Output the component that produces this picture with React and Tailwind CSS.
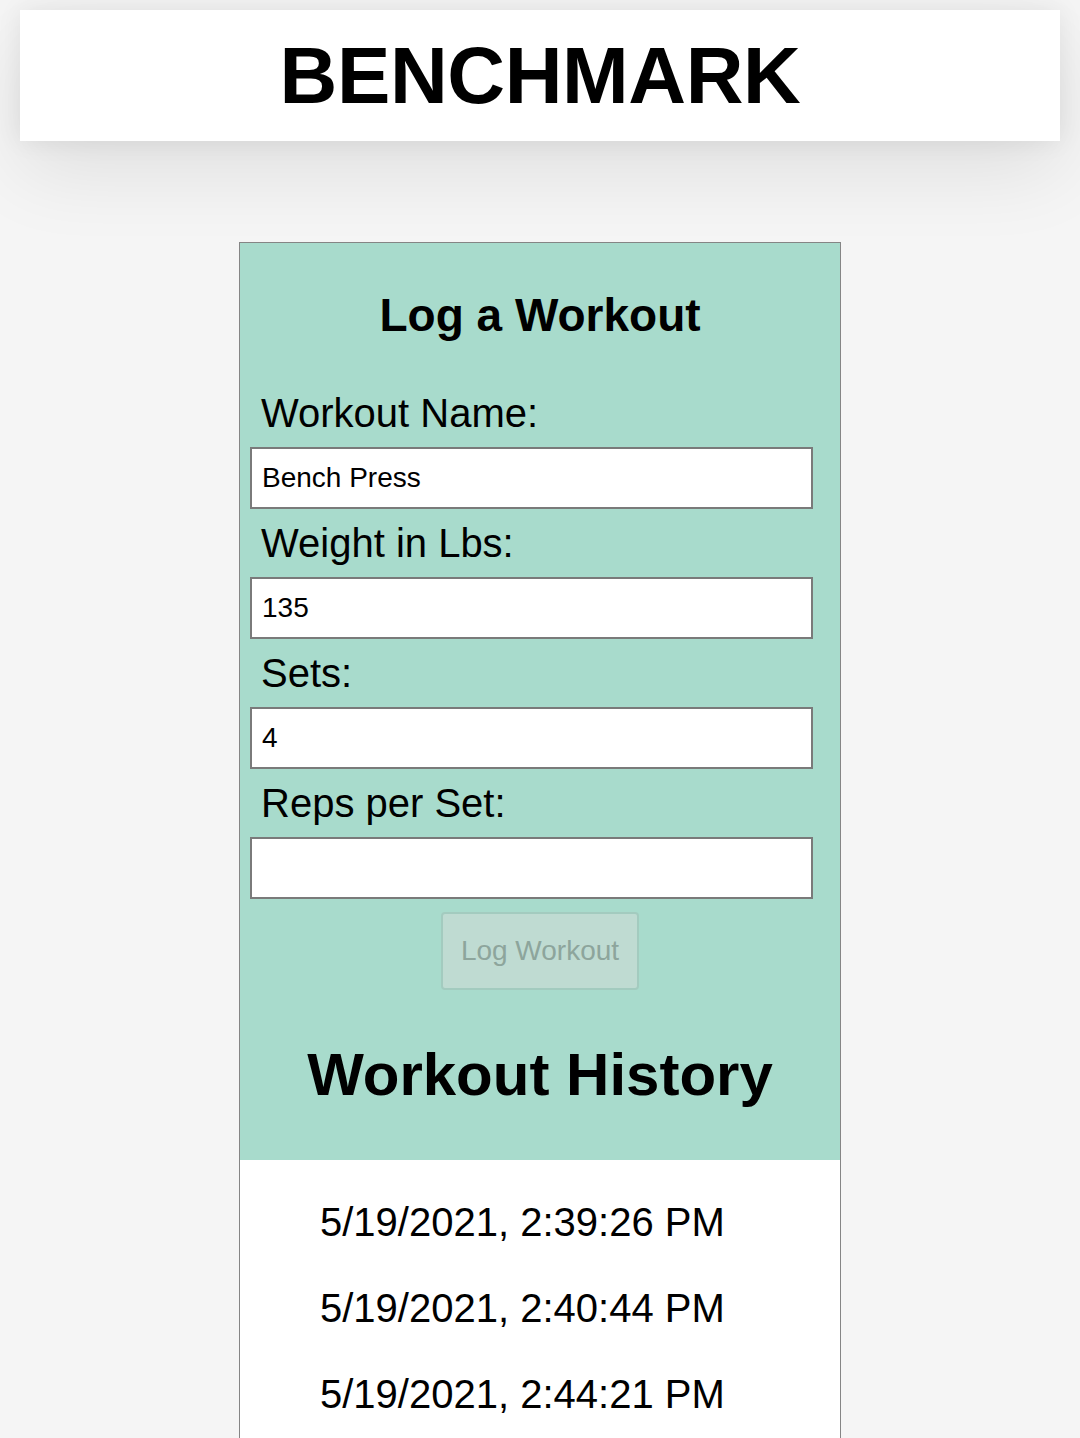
import React from "react";

const FIELDS = [
  { label: "Workout Name:", value: "Bench Press" },
  { label: "Weight in Lbs:", value: "135" },
  { label: "Sets:", value: "4" },
  { label: "Reps per Set:", value: "" },
];

const HISTORY = [
  "5/19/2021, 2:39:26 PM",
  "5/19/2021, 2:40:44 PM",
  "5/19/2021, 2:44:21 PM",
];

export default function App() {
  return (
    <div
      className="min-h-[1438px] bg-[#f5f5f5] pt-[10px] text-black"
      style={{ fontFamily: '"Liberation Sans", Arial, Helvetica, sans-serif' }}
    >
      {/* header */}
      <header className="mx-[20px] flex h-[131px] items-center justify-center bg-white shadow-[0_0_24px_rgba(0,0,0,0.07),0_30px_80px_rgba(0,0,0,0.09)]">
        <h1 className="text-[80px] font-bold leading-none tracking-[-0.4px]">BENCHMARK</h1>
      </header>

      <div className="mx-auto mt-[101px] w-[602px] border border-b-0 border-[#858585]">
        <div className="bg-[#a8dbcc]">
          <h2 className="pt-[49px] text-center text-[46px] font-bold leading-[46px]">Log a Workout</h2>

          <form className="mt-[41px] flex flex-col">
            {FIELDS.map((field) => (
              <div key={field.label} className="flex flex-col">
                <label className="h-[68px] pl-[21px] text-[40px] leading-[68px]">{field.label}</label>
                <input
                  type="text"
                  defaultValue={field.value}
                  className="ml-[10px] h-[62px] w-[563px] border-2 border-[#7a7a7a] bg-white px-[10px] text-[28px] text-black outline-none"
                />
              </div>
            ))}
            <div className="mt-[13px] flex justify-center">
              <button
                type="button"
                disabled
                className="h-[78px] w-[198px] rounded-[4px] border-2 border-[#a3cbbf] bg-[#bfdbd2] text-[28px] text-[#8da59c]"
              >
                Log Workout
              </button>
            </div>
          </form>

          <h2 className="pt-[55px] pb-[55px] text-center text-[60px] font-bold leading-[60px]">Workout History</h2>
        </div>

        <ul className="bg-white pt-[19px] pl-[80px] pb-[20px]">
          {HISTORY.map((date) => (
            <li key={date} className="text-[40px] leading-[86px]">
              {date}
            </li>
          ))}
        </ul>
      </div>
    </div>
  );
}
